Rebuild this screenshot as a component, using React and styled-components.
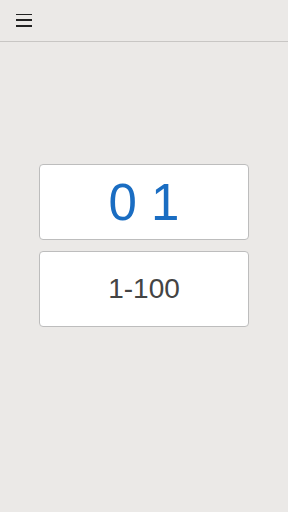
import React from "react";
import styled, { createGlobalStyle } from "styled-components";

const GlobalStyle = createGlobalStyle`
  html, body {
    margin: 0;
    padding: 0;
    background: #ebe9e7;
    font-family: "Liberation Sans", Arial, sans-serif;
  }
`;

const Page = styled.div`
  width: 288px;
  min-height: 512px;
  background: #ebe9e7;
`;

const TopBar = styled.header`
  display: flex;
  align-items: center;
  height: 41px;
  padding-left: 16px;
  border-bottom: 1px solid #c8c6c4;
  box-sizing: border-box;
  height: 42px;
`;

const MenuButton = styled.button`
  display: flex;
  flex-direction: column;
  justify-content: space-between;
  width: 16px;
  height: 13px;
  padding: 0;
  margin-top: -1px;
  border: none;
  background: none;
`;

const MenuLine = styled.span`
  display: block;
  height: 1.6px;
  background: #222;
`;

const Content = styled.main`
  display: flex;
  flex-direction: column;
  align-items: center;
  gap: 11px;
  padding-top: 122px;
`;

const Card = styled.div`
  display: flex;
  align-items: center;
  justify-content: center;
  width: 210px;
  height: 76px;
  box-sizing: border-box;
  background: #ffffff;
  border: 1px solid #bdbdbd;
  border-radius: 4px;
  color: ${(p) => p.$color};
  font-size: ${(p) => p.$size}px;
  line-height: 1;
`;

export default function App() {
  return (
    <Page>
      <GlobalStyle />
      <TopBar>
        <MenuButton aria-label="menu">
          <MenuLine />
          <MenuLine />
          <MenuLine />
        </MenuButton>
      </TopBar>
      <Content>
        <Card $color="#1a6dc2" $size={51}>0 1</Card>
        <Card $color="#444444" $size={28}>1-100</Card>
      </Content>
    </Page>
  );
}
